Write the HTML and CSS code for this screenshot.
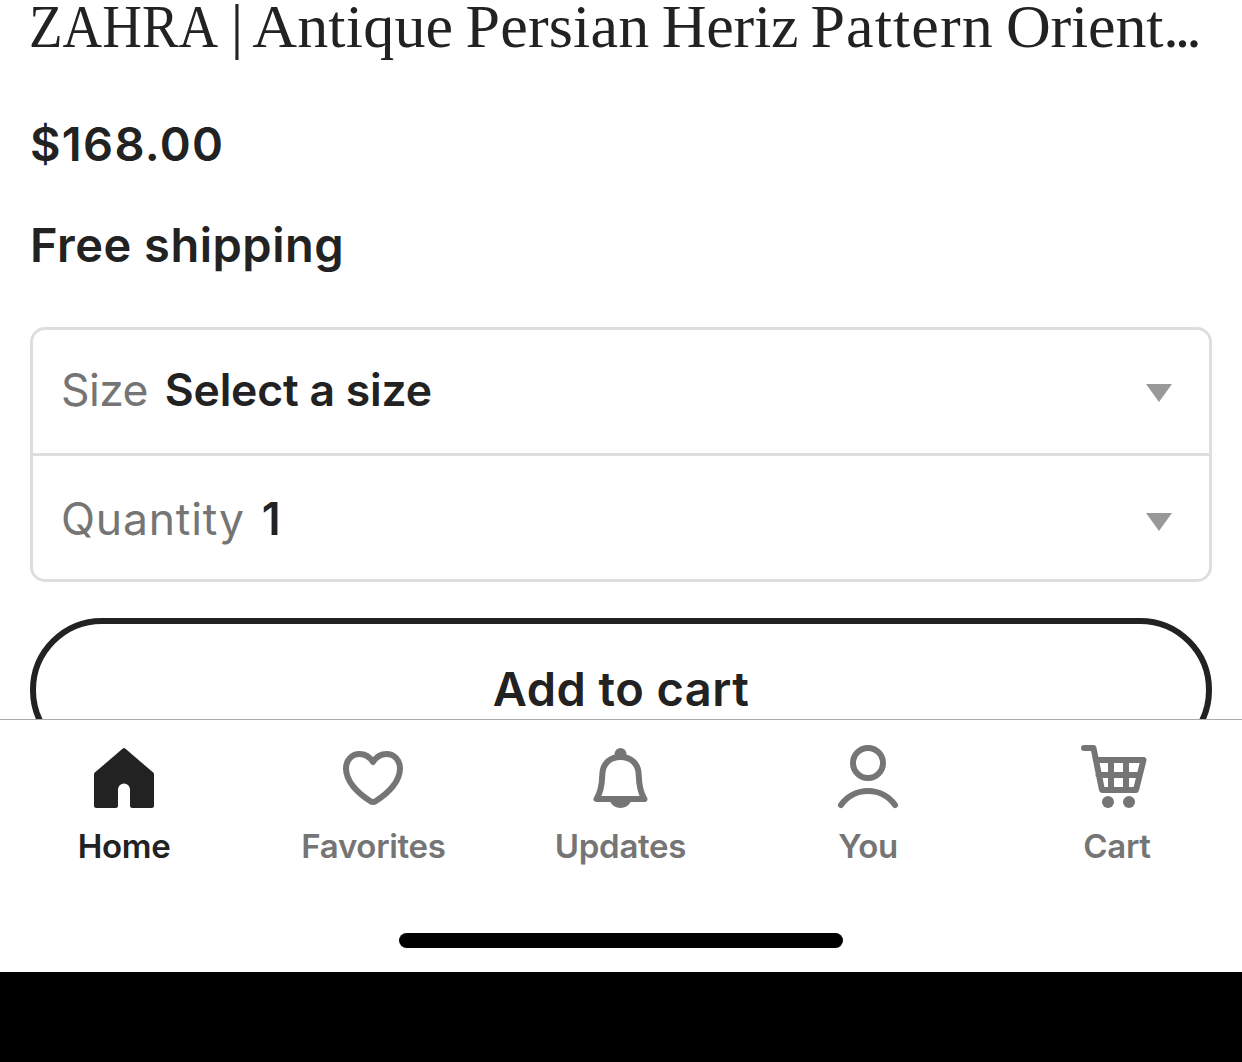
FILE: index.html
```html
<!DOCTYPE html>
<html lang="en">
<head>
<meta charset="utf-8">
<title>Listing</title>
<link rel="stylesheet" href="styles.css">
</head>
<body>
<div class="screen">
  <main class="listing">
    <h1 class="title"><span class="brand">ZAHRA</span> | Antique Persian <span class="tight">Heriz</span> <span class="loose">Pattern</span> <span class="tight">Orient</span><span class="dots">...</span></h1>
    <p class="price">$168.00</p>
    <p class="shipping">Free shipping</p>
    <div class="options">
      <div class="option option-size">
        <span class="option-label">Size</span>
        <span class="option-value">Select a size</span>
        <svg class="arrow" viewBox="0 0 26 18"><path d="M0 0H26L13 18Z"/></svg>
      </div>
      <div class="option option-quantity">
        <span class="option-label">Quantity</span>
        <span class="option-value">1</span>
        <svg class="arrow" viewBox="0 0 26 18"><path d="M0 0H26L13 18Z"/></svg>
      </div>
    </div>
    <button class="add">Add to cart</button>
  </main>
  <nav class="tabs">
    <a class="tab active">
      <svg class="icon solid" viewBox="0 0 72 72"><path d="M34.8 6.5Q36 5.5 37.2 6.5L65.2 30.6Q66 31.3 66 32.3V63.5Q66 66 63.500 66H44.500Q42 66 42 63.500V47.500A6 6 0 0 0 30 47.500V63.500Q30 66 27.500 66H8.500Q6 66 6 63.500V32.300Q6 31.300 6.800 30.600Z"/></svg>
      <span class="tab-label">Home</span>
    </a>
    <a class="tab">
      <svg class="icon" viewBox="0 0 72 72"><path d="M36 20C32.500 14.500 28 12 22.500 12C14.500 12 9 18.500 9 26.500C9 39 20 51 33.500 59.200Q36 60.800 38.500 59.200C52 51 63 39 63 26.500C63 18.500 57.500 12 49.500 12C44 12 39.500 14.500 36 20Z"/></svg>
      <span class="tab-label favorites">Favorites</span>
    </a>
    <a class="tab">
      <svg class="icon" viewBox="0.5 0 72 72"><path d="M12 57H60C55.500 50 54.500 43 54.200 33C54 21 46 15 36 15S18 21 17.800 33C17.500 43 16.500 50 12 57Z"/><path class="fill" d="M30 14V12A6 6 0 0 1 42 12V14ZM25.500 59C29 68.300 43 68.300 46.500 59Z"/></svg>
      <span class="tab-label">Updates</span>
    </a>
    <a class="tab">
      <svg class="icon" viewBox="0 0 72 72"><circle cx="36" cy="21" r="15"/><path d="M9 63A33 33 0 0 1 63 63"/></svg>
      <span class="tab-label">You</span>
    </a>
    <a class="tab">
      <svg class="icon" viewBox="0 0 72 72"><path d="M3 6H12.500L21 48H55L62.500 18H15M17.500 33H58M30 18V48M45 18V48"/><circle class="fill" cx="27" cy="60" r="6"/><circle class="fill" cx="48" cy="60" r="6"/></svg>
      <span class="tab-label">Cart</span>
    </a>
  </nav>
  <div class="indicator"></div>
</div>
</body>
</html>
```
FILE: styles.css
```css
* { box-sizing: border-box; }
body {
  margin: 0;
  background: #000;
  color: #222;
  font-family: Inter, "Liberation Sans", sans-serif;
}
.screen {
  display: flex;
  flex-direction: column;
  height: 972px;
  background: #fff;
}
.listing {
  height: 719px;
  padding: 0 30px;
  overflow: hidden;
}
.title {
  margin: 0 0 62px -1px;
  font: 400 62px/52px "Liberation Serif", serif;
  letter-spacing: 0.2px;
  word-spacing: -3.5px;
  white-space: nowrap;
}
.brand {
  display: inline-block;
  margin-right: -24px;
  letter-spacing: 0;
  transform: scaleX(0.886);
  transform-origin: left;
}
.tight { letter-spacing: -0.2px; }
.loose { letter-spacing: 1.1px; }
.dots { letter-spacing: -4px; }
.price,
.shipping {
  margin: 0;
  font-size: 47px;
  font-weight: 600;
  line-height: 60px;
}
.price {
  margin-bottom: 41px;
  letter-spacing: 1.3px;
}
.shipping {
  margin-bottom: 52px;
  letter-spacing: 0.5px;
}
.options {
  height: 255px;
  border: 3px solid #dedede;
  border-radius: 15px;
}
.option {
  display: flex;
  align-items: center;
  height: 123px;
  padding: 0 37px 0 28px;
  font-size: 44.5px;
  line-height: 60px;
}
.option-size { padding-bottom: 3px; }
.option-quantity {
  height: 126px;
  padding-top: 3px;
  border-top: 3px solid #dedede;
}
.option-label {
  color: #757575;
  font-weight: 400;
}
.option-size .option-label { letter-spacing: -0.6px; }
.option-quantity .option-label { letter-spacing: 0.8px; }
.option-value {
  margin-left: 17px;
  font-weight: 600;
  letter-spacing: -0.2px;
}
.arrow {
  width: 26px;
  height: 18px;
  margin-left: auto;
  margin-top: 5px;
  fill: #999;
}
.add {
  display: block;
  width: 100%;
  height: 144px;
  margin-top: 36px;
  padding: 0 0 2px;
  border: 6px solid #222;
  border-radius: 72px;
  background: none;
  color: #222;
  font: 600 47px/60px Inter, sans-serif;
  letter-spacing: 0.45px;
}
.tabs {
  display: grid;
  grid-template-columns: 248px 249px 247px 248px 250px;
  height: 214px;
  padding-top: 22px;
  border-top: 1px solid #aaa;
}
.tab {
  display: flex;
  flex-direction: column;
  align-items: center;
  color: #757575;
}
.active { color: #222; }
.icon {
  width: 72px;
  height: 72px;
  overflow: visible;
  fill: none;
  stroke: currentColor;
  stroke-width: 6;
  stroke-linecap: round;
  stroke-linejoin: round;
}
.solid,
.fill {
  fill: currentColor;
  stroke: none;
}
.tab-label {
  margin-top: 12px;
  font-size: 33px;
  font-weight: 600;
  letter-spacing: -0.3px;
  line-height: 40px;
}
.favorites { margin-left: 2px; }
.indicator {
  width: 444px;
  height: 15px;
  margin: 0 auto;
  border-radius: 8px;
  background: #000;
}
```
